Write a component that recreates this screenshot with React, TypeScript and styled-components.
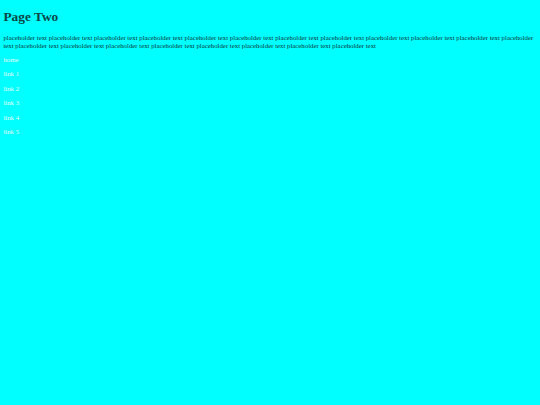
import styled, { createGlobalStyle } from "styled-components";

const GlobalStyle = createGlobalStyle`
    html, body {
        background-color: #00ffff;
    }
    body {
        margin: 3.4px;
        font-family: "Liberation Serif", "Times New Roman", serif;
    }
`

const Page = styled.div`
    color: #0a3535;
`

const Title = styled.h1`
    font-size: 13.4px;
    font-weight: bold;
    color: #0b4646;
    margin: 6px 0 9px;
`

const Text = styled.p`
    font-size: 6.8px;
    line-height: 7.2px;
    margin: 7.2px 0;
`

const Nav = styled.nav`
    display: block;
`

const NavItem = styled.p`
    font-size: 6.8px;
    line-height: 7.2px;
    margin: 7.2px 0;

    a {
        color: #e6ffff;
        text-decoration: none;
    }
`

const links = ["home", "link 1", "link 2", "link 3", "link 4", "link 5"];

export default function App() {
    return (
        <>
            <GlobalStyle />
            <Page>
                <Title>Page Two</Title>
                <Text>{Array(20).fill("placeholder text").join(" ")}</Text>
                <Nav>
                    {links.map((l) => (
                        <NavItem key={l}>
                            <a href="#">{l}</a>
                        </NavItem>
                    ))}
                </Nav>
            </Page>
        </>
    )
}
